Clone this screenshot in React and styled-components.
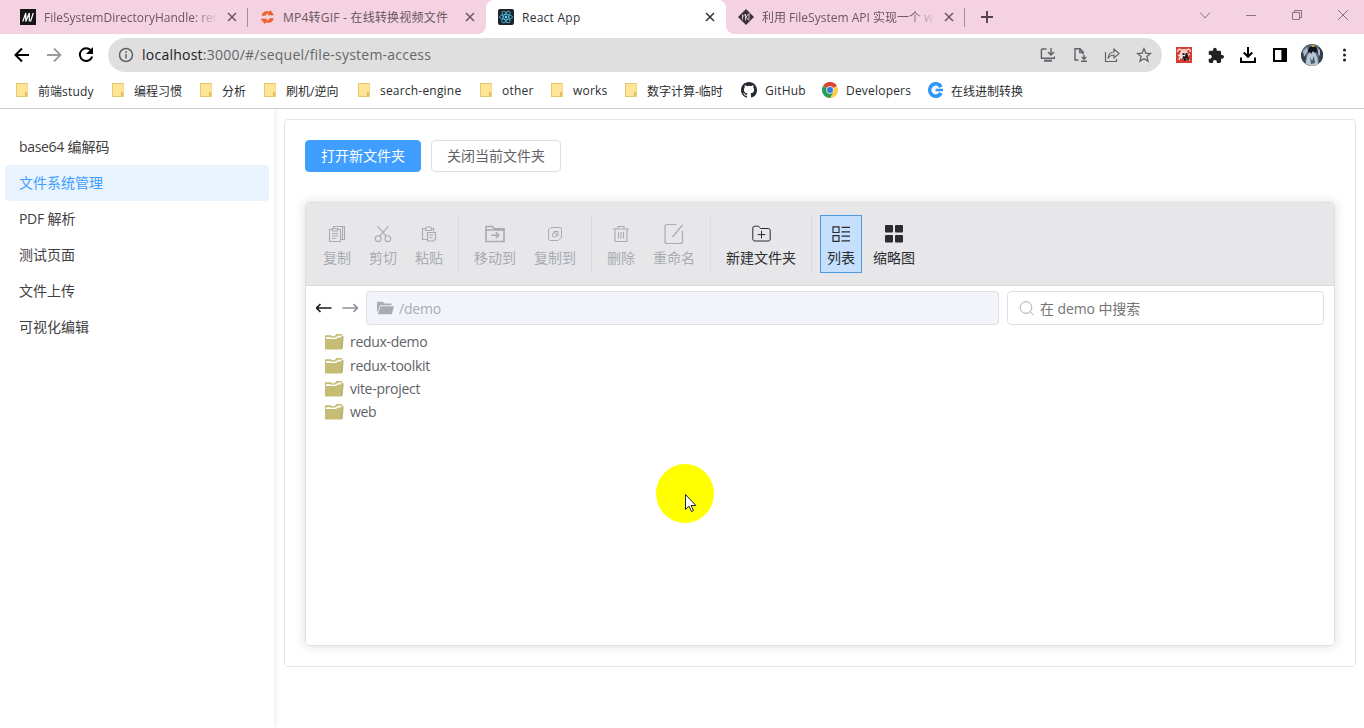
import React from 'react';
import styled, { createGlobalStyle, css } from 'styled-components';

const GlobalStyle = createGlobalStyle`
  * {
    box-sizing: border-box;
  }
  body {
    margin: 0;
    background: #fff;
    overflow: hidden;
    font-family: 'Open Sans', 'Noto Sans CJK SC', sans-serif;
  }
  svg {
    display: block;
    flex: none;
  }
`;

const Page = styled.div`
  position: relative;
  display: flex;
  flex-direction: column;
  width: 1364px;
  height: 728px;
  overflow: hidden;
`;

/* tab strip */

const TabStrip = styled.div`
  display: flex;
  height: 34px;
  padding-left: 8px;
  background: #f4d2e2;
`;

const TabBox = styled.div`
  position: relative;
  display: flex;
  flex: none;
  align-items: center;
  width: ${({ $width }) => $width}px;
  padding: 0 10px 0 12px;
  font-size: 12px;
  color: #6a5660;
  ${({ $line }) =>
    $line &&
    css`
      background: linear-gradient(#a58c98, #a58c98) right 8px / 1px 19px
        no-repeat;
    `}
  ${({ $active }) =>
    $active &&
    css`
      background: #fff;
      color: #303134;
      border-radius: 8px 8px 0 0;

      &::before,
      &::after {
        content: '';
        position: absolute;
        bottom: 0;
        width: 8px;
        height: 8px;
      }
      &::before {
        left: -8px;
        background: radial-gradient(circle at 0 0, transparent 7.5px, #fff 8px);
      }
      &::after {
        right: -8px;
        background: radial-gradient(
          circle at 100% 0,
          transparent 7.5px,
          #fff 8px
        );
      }
    `}
`;

const TabTitle = styled.span`
  flex: 1;
  min-width: 0;
  margin: 0 8px;
  padding-top: 1px;
  overflow: hidden;
  white-space: nowrap;
  line-height: 18px;
  letter-spacing: ${({ $track }) => $track || 0}px;
  ${({ $fade }) =>
    $fade &&
    css`
      mask-image: linear-gradient(to left, transparent, #000 24px);
    `}
`;

const Latin = styled.span`
  letter-spacing: ${({ $track }) => $track || 0}px;
`;

const NewTab = styled.div`
  display: flex;
  flex: none;
  align-items: center;
  width: 217px;
  padding-left: 14px;
  color: #54434b;
`;

const WindowButtons = styled.div`
  display: flex;
  height: 29px;
  color: #6f5b65;

  > span {
    display: flex;
    flex: none;
    align-items: center;
    justify-content: center;
    width: 46px;
  }
`;

/* address bar */

const AddressRow = styled.div`
  display: flex;
  align-items: center;
  height: 42px;
  padding-left: 6px;
`;

const IconSlot = styled.span`
  display: flex;
  align-items: center;
  justify-content: center;
  width: 32px;
  height: 32px;
  color: ${({ $dim }) => ($dim ? '#9b9b9d' : 'inherit')};
`;

const Omnibox = styled.div`
  display: flex;
  align-items: center;
  width: 1054px;
  height: 34px;
  margin: 0 6px;
  padding: 0 2px 0 10px;
  border-radius: 17px;
  background: #dfdfdf;
  color: #5f6368;
`;

const Url = styled.span`
  flex: 1;
  margin-left: 8px;
  font-size: 14px;
  line-height: 20px;
  letter-spacing: 0.24px;
  color: #65686c;

  b {
    font-weight: 400;
    color: #202124;
  }
`;

/* bookmarks */

const BookmarkBar = styled.div`
  display: flex;
  height: 33px;
  padding-left: 14px;
  border-bottom: 1px solid #c9c9cb;
`;

const BookmarkItem = styled.div`
  display: flex;
  align-items: center;
  gap: 8px;
  width: ${({ $width }) => $width}px;
  height: 29px;
  font-size: 12px;
  white-space: nowrap;
  color: #2b2c2f;

  svg {
    margin-bottom: 1px;
  }
`;

const BookmarkFolder = styled.i`
  flex: none;
  width: 12px;
  height: 14px;
  margin: 0 2px 1px;
  border: 1px solid #e6c86b;
  border-right-color: #f0d98a;
  background: linear-gradient(#e3bf57, #e3bf57) right bottom / 2px 4px no-repeat,
    #fde496;
`;

/* page body */

const Body = styled.div`
  display: flex;
  flex: 1;
  min-height: 0;
`;

const Sidebar = styled.nav`
  width: 274px;
  padding: 20px 5px;
  box-shadow: 0 0 6px rgba(0, 0, 0, 0.12);
  clip-path: inset(0 -8px 0 0);
`;

const NavItem = styled.a`
  display: flex;
  align-items: center;
  height: 36px;
  padding: 0 0 2px 14px;
  border-radius: 4px;
  font-size: 14px;
  letter-spacing: 0;
  white-space: pre;
  color: ${({ $active }) => ($active ? '#409eff' : '#3f4043')};
  background: ${({ $active }) => ($active ? '#e9f3fe' : 'transparent')};
`;

const Card = styled.main`
  width: 1072px;
  height: 548px;
  margin: 10px 0 0 10px;
  padding: 20px;
  border: 1px solid #e4e4e7;
  border-radius: 4px;
`;

const Actions = styled.div`
  display: flex;
  gap: 10px;
  margin-bottom: 30px;
`;

const ActionButton = styled.button`
  height: 32px;
  padding: 0 15px;
  border: 1px solid ${({ $primary }) => ($primary ? '#409eff' : '#dcdfe6')};
  border-radius: 4px;
  background: ${({ $primary }) => ($primary ? '#409eff' : '#fff')};
  color: ${({ $primary }) => ($primary ? '#fff' : '#606266')};
  font: inherit;
  font-size: 14px;
  line-height: 1;
`;

const Explorer = styled.section`
  height: 444px;
  border: 1px solid #e0e0e3;
  border-radius: 4px;
  box-shadow: 0 0 12px rgba(0, 0, 0, 0.14);
`;

const Toolbar = styled.div`
  display: flex;
  gap: 4px;
  height: 83px;
  padding: 12px 10px;
  border-bottom: 1px solid #dadadd;
  background: #e7e7ea;
`;

const Tool = styled.div`
  display: flex;
  flex-direction: column;
  align-items: center;
  height: 58px;
  padding: 7px 6px 0;
  border: 1px solid ${({ $selected }) => ($selected ? '#4a9be2' : 'transparent')};
  background: ${({ $selected }) => ($selected ? '#c5dfff' : 'transparent')};
  color: ${({ $disabled }) => ($disabled ? '#a8abb2' : '#2b2c2f')};
  font-size: 14px;
  line-height: 24px;
  white-space: nowrap;
`;

const ToolIcon = styled.span`
  display: flex;
  align-items: center;
  justify-content: center;
  height: 22px;
  margin-bottom: 1px;
`;

const Divider = styled.i`
  width: 1px;
  height: 56px;
  margin: 1px 4px;
  background: #dcdcdf;
`;

const PathRow = styled.div`
  display: flex;
  align-items: center;
  height: 44px;
  padding: 0 10px 0 9px;
`;

const HistoryButton = styled.span`
  display: flex;
  flex: none;
  justify-content: center;
  width: 18px;
  margin-right: ${({ $disabled }) => ($disabled ? 7 : 8)}px;
  color: ${({ $disabled }) => ($disabled ? '#8f9095' : '#1b1b1d')};
`;

const Field = styled.div`
  display: flex;
  flex: none;
  align-items: center;
  gap: 5px;
  width: ${({ $width }) => $width}px;
  height: 34px;
  margin-right: 8px;
  padding: 0 10px;
  border: 1px solid #dcdfe6;
  border-radius: 4px;
  background: ${({ $muted }) => ($muted ? '#f3f4fa' : '#fff')};
  color: ${({ $muted }) => ($muted ? '#a8abb2' : '#757575')};
  font-size: 14px;
  white-space: nowrap;
`;

const SearchField = styled(Field)`
  margin-right: 0;

  svg {
    color: #a8abb2;
  }
`;

const FileList = styled.ul`
  margin: 0;
  padding: 0 0 0 18px;
  list-style: none;
`;

const FileRow = styled.li`
  display: flex;
  align-items: center;
  gap: 6px;
  height: 23.4px;
  font-size: 14px;
  letter-spacing: -0.3px;
  color: #606266;
`;

const Pointer = styled.div`
  position: absolute;
  left: 656px;
  top: 464px;
  width: 58px;
  height: 59px;
  border-radius: 50%;
  background: #ff0;

  svg {
    position: absolute;
    left: 28px;
    top: 29px;
  }
`;

/* icons */

const Svg = ({ w = 16, h = w, box, sw = 1.2, children }) => (
  <svg
    width={w}
    height={h}
    viewBox={box || `0 0 ${w} ${h}`}
    fill="none"
    stroke="currentColor"
    strokeWidth={sw}
  >
    {children}
  </svg>
);

const CloseIcon = () => (
  <Svg w={12} sw={1.5}>
    <path d="M2 2l8 8M10 2l-8 8" />
  </Svg>
);

const MdnIcon = () => (
  <Svg>
    <path d="M0 0h16v16H0z" fill="#161616" stroke="none" />
    <path d="M2.800 12.500L5.800 4v8.500L9.300 4v8.500M10.500 12.500L13.300 4" stroke="#fff" />
  </Svg>
);

const ConvertIcon = () => (
  <Svg w={15} h={16}>
    <path
      d="M2 6.500C2.500 3 6 1.500 9 3l1.500-1.500L13.500 6H8l1.300-1.300C7 3.900 5.500 5 5.400 6.500zM13.300 9.500C12.800 13 9 14.500 6.300 13l-1.600 1.600L1 10h6l-1.300 1.300c2.300.8 3.800-.3 4-1.800z"
      fill="#f0602a"
      stroke="#f0602a"
      strokeWidth=".6"
    />
  </Svg>
);

const ReactIcon = () => (
  <Svg sw={0.9}>
    <rect width="16" height="16" rx="2" fill="#1f232b" stroke="none" />
    <g stroke="#4bb4d6">
      <ellipse cx="8" cy="8" rx="6.500" ry="2.500" />
      <ellipse cx="8" cy="8" rx="6.500" ry="2.500" transform="rotate(60 8 8)" />
      <ellipse cx="8" cy="8" rx="6.500" ry="2.500" transform="rotate(120 8 8)" />
    </g>
    <circle cx="8" cy="8" r="1.300" fill="#61dafb" stroke="none" />
  </Svg>
);

const DiamondIcon = () => (
  <Svg>
    <path d="M8 0l8 8-8 8-8-8z" fill="#3a3238" stroke="none" />
    <path
      d="M4.500 5.500v5M4.500 8l3-3v6.500M8 8l3-3.500v6M8 8l3 3.500"
      stroke="#e8d5df"
      strokeWidth=".9"
    />
  </Svg>
);

const GithubIcon = () => (
  <Svg box="0 0 16 16">
    <path
      fill="#24292f"
      stroke="none"
      d="M8 0C3.580 0 0 3.580 0 8c0 3.540 2.290 6.530 5.470 7.590.4.070.55-.17.55-.38v-1.490c-2.010.37-2.530-.49-2.690-.94-.09-.23-.48-.94-.82-1.130-.28-.15-.68-.52-.01-.53.63-.01 1.080.58 1.230.82.72 1.210 1.870.87 2.330.66.070-.52.28-.87.51-1.070-1.780-.2-3.640-.89-3.640-3.950 0-.87.31-1.590.82-2.150-.08-.2-.36-1.020.08-2.120 0 0 .67-.21 2.200.82a7.600 7.600 0 0 1 4 0c1.530-1.040 2.200-.82 2.200-.82.44 1.100.16 1.920.08 2.120.51.56.82 1.270.82 2.150 0 3.070-1.870 3.750-3.650 3.950.29.25.54.73.54 1.480v2.200c0 .21.15.46.55.38A8 8 0 0 0 16 8c0-4.420-3.580-8-8-8z"
    />
  </Svg>
);

const ChromeIcon = () => (
  <Svg>
    <g stroke="none">
      <path d="M8 8L1.070 4A8 8 0 0 1 14.930 4z" fill="#db4437" />
      <path d="M8 8l6.930-4A8 8 0 0 1 8 16z" fill="#ffcd40" />
      <path d="M8 8L1.070 4A8 8 0 0 0 8 16l3.500-6z" fill="#2a9d58" />
      <circle cx="8" cy="8" r="3.800" fill="#f1f1f1" />
      <circle cx="8" cy="8" r="3" fill="#2f7de1" />
    </g>
  </Svg>
);

const BlueCIcon = () => (
  <Svg w={16}>
    <path d="M14 5A6 6 0 1 0 14 11" stroke="#3297f5" strokeWidth="4" />
    <path d="M8.500 8H16" stroke="#3297f5" strokeWidth="2.600" />
    <path d="M11 5.200a3.600 3.600 0 1 0 0 5.600" stroke="#fff" strokeWidth="1.200" />
  </Svg>
);

const ExtensionIcon = () => (
  <Svg>
    <path d="M0 0h16v16H0z" fill="#d63c30" stroke="none" />
    <circle cx="8" cy="8" r="4.500" fill="#f3dcd8" stroke="none" />
    <path
      d="M1.500 5c0-3 3-3.500 4-1.500 1.500-1 3.500-1 5 0 1-2 4-1.500 4 1.500M2 8.500h2M3 13c0-2 1-3 3-3M12 12l2 1.500M12 8l2-1"
      stroke="#f7e6e3"
      strokeWidth="1.300"
    />
    <path
      d="M6.500 6h2v2h-2zM9.500 6h2l.5 3 1.500 4.500-2-.5-1-2-1 3H8l-.5-2.500L6 13l1-4 2 .500z"
      fill="#25191a"
      stroke="none"
    />
  </Svg>
);

const AvatarIcon = () => (
  <Svg w={22}>
    <defs>
      <clipPath id="face">
        <circle cx="11" cy="11" r="11" />
      </clipPath>
    </defs>
    <g clipPath="url(#face)" stroke="none">
      <path d="M0 0h22v22H0z" fill="#566571" />
      <path d="M0 9c3-1 5 2 5 5l-2 8H0zM18 3l4 4v14l-4-3z" fill="#353e4a" />
      <path d="M2 7l4-4 1 4-4 6zM16 4l3 2v6l-2-2z" fill="#a9b9c6" />
      <path d="M5 20c0-7 2-12 6-13 4 1 6 6 6 14l-6 1z" fill="#b5c6d6" />
      <path d="M7 9c0-5 2-7 5-7s5 3 5 8l-2-3-1 2-2-2-2 3-1-2z" fill="#10141c" />
      <path d="M9 13l2 4 2-5 1 7-4 1z" fill="#4b596a" />
      <path d="M10 1h4l-1 2h-2z" fill="#d2a53b" />
    </g>
  </Svg>
);

const FileFolderIcon = () => (
  <Svg w={20} h={17}>
    <path
      d="M1 2.200h6l1 1h2.500L12.500 1h5.300l.7 2.200h1.200l-1 12.300-1.200.9H1z"
      fill="#c6bd74"
      stroke="none"
    />
    <path
      d="M2 4.600c3-1.700 5 .4 8 .2C13 4.500 12 2.500 17.500 2.500L17 4.400h-3L12 6H2z"
      fill="#fff"
      stroke="none"
    />
    <path d="M18.500 4.800l-1 11" stroke="#a9a47b" strokeWidth=".7" />
  </Svg>
);

const toolIcons = {
  copy: (
    <Svg w={18} sw={1.1}>
      <path d="M1.500 4.500h3v-1h5v1h3v12h-11zM4.500 4.500V6h5V4.500M5.500 3.500v-2h11v13h-4M4 8.500h6M4 11h6M4 13.500h3.500M14.500 1.500v13" />
    </Svg>
  ),
  cut: (
    <Svg w={18} sw={1.1}>
      <circle cx="4.200" cy="13.700" r="2.900" />
      <circle cx="13.800" cy="13.700" r="2.900" />
      <path d="M3.500 1.200L12.300 11.200M14.500 1.200L5.700 11.200" />
    </Svg>
  ),
  paste: (
    <Svg w={16} sw={1.2}>
      <path d="M6 13.500H1.500v-11h3v2h6v-2h2v3M4.500 2.500l1-1.500h4l1 1.500M6.500 6.500h8v6.500l-2 2h-6zM8.500 9h4M8.500 11.500h3" />
    </Svg>
  ),
  move: (
    <Svg w={20} h={18} sw={1.6}>
      <path d="M1 16.500v-15h6.500l2 2.300H19v12.700zM1 5h18M6 10.300h7.500M10.800 7.300l3 3-3 3" />
    </Svg>
  ),
  copyTo: (
    <Svg w={16} sw={1}>
      <path d="M4 1.500h8.500a2 2 0 0 1 2 2V11l-3.500 3.500H3.500a2 2 0 0 1-2-2V4z" />
      <rect x="5.500" y="7" width="4" height="4" rx="1" />
      <path d="M7 7V5.500h4v4H9.500" />
    </Svg>
  ),
  remove: (
    <Svg w={16} h={18} sw={1.1}>
      <path d="M0 4h16M5 4V1.500h6V4M2 4v12.500h12V4M5.500 7v6.500M8 7v6.500M10.500 7v6.500" />
    </Svg>
  ),
  rename: (
    <Svg w={20} h={22} sw={1.2}>
      <path d="M12.500 1.500H3a2 2 0 0 0-2 2v15a2 2 0 0 0 2 2h13.500a2 2 0 0 0 2-2V8M18.500 2L8.500 14" />
    </Svg>
  ),
  create: (
    <Svg w={19} h={18} sw={1}>
      <path d="M.8 3a1.800 1.800 0 0 1 1.800-1.800h4l2 2.300h7.600a2 2 0 0 1 2 2V14a2 2 0 0 1-2 2H2.800a2 2 0 0 1-2-2zM9.500 5.800v7.600M5.700 9.600h7.600" />
    </Svg>
  ),
  list: (
    <Svg w={18} h={18} sw={1.2}>
      <path d="M1 1.800h6v5.700H1zM1 10.700h6v5.700H1zM9.500 2.300H18M9.500 6.900H18M9.500 11.200H18M9.500 15.800H18" />
    </Svg>
  ),
  grid: (
    <Svg w={18}>
      <g fill="currentColor" stroke="none">
        <rect width="8" height="7.500" rx="1" />
        <rect x="10" width="8" height="7.500" rx="1" />
        <rect y="10" width="8" height="7.500" rx="1" />
        <rect x="10" y="10" width="8" height="7.500" rx="1" />
      </g>
    </Svg>
  ),
};

const HistoryArrow = () => (
  <Svg w={16} h={12} sw={1.6}>
    <path d="M.5 6h15M11.500 2l4 4-4 4" />
  </Svg>
);

const FlippedArrow = styled.span`
  transform: scaleX(-1);
`;

/* data */

const bookmarks = [
  { cjk: '前端', latin: 'study', width: 96 },
  { cjk: '编程习惯', width: 88 },
  { cjk: '分析', width: 64 },
  { cjk: '刷机/逆向', width: 94 },
  { latin: 'search-engine', width: 122 },
  { latin: 'other', width: 71 },
  { latin: 'works', width: 74 },
  { cjk: '数字计算-临时', width: 118 },
  { latin: 'GitHub', width: 81, icon: <GithubIcon /> },
  { latin: 'Developers', width: 105, icon: <ChromeIcon /> },
  { cjk: '在线进制转换', width: 110, icon: <BlueCIcon /> },
];

const navItems = [
  { latin: 'base64', cjk: ' 编解码' },
  { cjk: '文件系统管理', active: true },
  { latin: 'PDF', cjk: ' 解析' },
  { cjk: '测试页面' },
  { cjk: '文件上传' },
  { cjk: '可视化编辑' },
];

const toolGroups = [
  [
    { icon: 'copy', label: '复制', disabled: true },
    { icon: 'cut', label: '剪切', disabled: true },
    { icon: 'paste', label: '粘贴', disabled: true },
  ],
  [
    { icon: 'move', label: '移动到', disabled: true },
    { icon: 'copyTo', label: '复制到', disabled: true },
  ],
  [
    { icon: 'remove', label: '删除', disabled: true },
    { icon: 'rename', label: '重命名', disabled: true },
  ],
  [{ icon: 'create', label: '新建文件夹' }],
  [
    { icon: 'list', label: '列表', selected: true },
    { icon: 'grid', label: '缩略图' },
  ],
];

const files = ['redux-demo', 'redux-toolkit', 'vite-project', 'web'];

const Tab = ({ icon, width, active, line, fade, track, children }) => (
  <TabBox $width={width} $active={active} $line={line}>
    {icon}
    <TabTitle $fade={fade} $track={track}>
      {children}
    </TabTitle>
    <CloseIcon />
  </TabBox>
);

const Tabs = () => (
  <TabStrip>
    <Tab icon={<MdnIcon />} width={240} line fade>
      FileSystemDirectoryHandle: remove
    </Tab>
    <Tab icon={<ConvertIcon />} width={238} track={0.22}>
      MP4转GIF - 在线转换视频文件
    </Tab>
    <Tab icon={<ReactIcon />} width={240} track={0.25} active>
      React App
    </Tab>
    <Tab icon={<DiamondIcon />} width={239} line fade>
      利用 FileSystem API 实现一个 web
    </Tab>
    <NewTab>
      <Svg w={16} sw={1.9}>
        <path d="M8 2v12M2 8h12" />
      </Svg>
    </NewTab>
    <WindowButtons>
      <span>
        <Svg w={12} sw={0.8}>
          <path d="M1 3.500l5 5.500 5-5.500" />
        </Svg>
      </span>
      <span>
        <Svg w={12} sw={0.8}>
          <path d="M1 6.500h10" />
        </Svg>
      </span>
      <span>
        <Svg w={12} sw={0.8}>
          <path d="M1.500 3.500h7v7h-7zM3.500 3.500v-2h7v7h-2" />
        </Svg>
      </span>
      <span>
        <Svg w={12} sw={0.8}>
          <path d="M1 1l10 10M11 1L1 11" />
        </Svg>
      </span>
    </WindowButtons>
  </TabStrip>
);

const OmniboxIcons = () => (
  <>
    <IconSlot>
      <Svg sw={1.4}>
        <path d="M6.500 2H2.200a.8.8 0 0 0-.8.800v8.400h13V9.500M11 1v6.500M8 5l3 3 3-3" />
        <path d="M4 13.700h8" strokeWidth="2" />
      </Svg>
    </IconSlot>
    <IconSlot>
      <Svg sw={1.4}>
        <path d="M6.500 13H3V1.800h5l3.200 3.200v2.500M7.800 2v3.500h3M12 8v4M9.800 10l2.200 2.200L14.200 10M9 14.300h6" />
      </Svg>
    </IconSlot>
    <IconSlot>
      <Svg sw={1.2}>
        <path d="M1.500 5v9.500h11V12M4 11.500C4.500 7 7 5 10 5V2l5 4.500-5 4.500V8c-2.500 0-4.500.8-6 3.500z" />
      </Svg>
    </IconSlot>
    <IconSlot>
      <Svg sw={1.3}>
        <path d="M8 1.800l1.800 4.300 4.700.4-3.600 3 1.100 4.600L8 11.700l-4 2.400 1.100-4.600-3.600-3 4.700-.4z" />
      </Svg>
    </IconSlot>
  </>
);

const AddressBar = () => (
  <AddressRow>
    <IconSlot>
      <Svg w={16} sw={2}>
        <path d="M15 8H2M8 1.500L1.500 8 8 14.500" />
      </Svg>
    </IconSlot>
    <IconSlot $dim>
      <Svg w={16} sw={1.8}>
        <path d="M1 8h13M8 1.500L14.500 8 8 14.500" />
      </Svg>
    </IconSlot>
    <IconSlot>
      <Svg w={16} sw={2}>
        <path d="M13.300 4A6.300 6.300 0 1 0 14.200 9.500" />
        <path d="M15 0v7H8z" fill="currentColor" stroke="none" />
      </Svg>
    </IconSlot>
    <Omnibox>
      <Svg w={16} sw={1.5}>
        <circle cx="8" cy="8" r="6.500" />
        <path d="M8 7v4.500M8 4.300v1.600" />
      </Svg>
      <Url>
        <b>localhost</b>:3000/#/sequel/file-system-access
      </Url>
      <OmniboxIcons />
    </Omnibox>
    <IconSlot>
      <ExtensionIcon />
    </IconSlot>
    <IconSlot>
      <Svg w={16} box="1 0 22 22">
        <path
          fill="#202124"
          stroke="none"
          d="M20.500 11H19V7c0-1.100-.9-2-2-2h-4V3.500a2.500 2.500 0 0 0-5 0V5H4c-1.100 0-2 .9-2 2v3.800h1.500a2.700 2.700 0 0 1 0 5.400H2V20c0 1.100.9 2 2 2h3.800v-1.500a2.700 2.700 0 0 1 5.400 0V22H17c1.100 0 2-.9 2-2v-4h1.500a2.500 2.500 0 0 0 0-5z"
        />
      </Svg>
    </IconSlot>
    <IconSlot>
      <Svg w={16} sw={2}>
        <path d="M8 0v9.500M3.800 5.500L8 9.800l4.200-4.300M1 10.500V15h14v-4.500" />
      </Svg>
    </IconSlot>
    <IconSlot>
      <Svg w={14}>
        <path d="M1 1h12v12H1z" strokeWidth="2" />
        <path d="M9 1h4v12H9z" fill="currentColor" />
      </Svg>
    </IconSlot>
    <IconSlot>
      <AvatarIcon />
    </IconSlot>
    <IconSlot>
      <Svg w={4} h={14}>
        <g fill="#202124" stroke="none">
          <circle cx="2.500" cy="2" r="1.500" />
          <circle cx="2.500" cy="7" r="1.500" />
          <circle cx="2.500" cy="12" r="1.500" />
        </g>
      </Svg>
    </IconSlot>
  </AddressRow>
);

const Bookmarks = () => (
  <BookmarkBar>
    {bookmarks.map(({ cjk, latin, width, icon }) => (
      <BookmarkItem key={cjk || latin} $width={width}>
        {icon || <BookmarkFolder />}
        <span>
          {cjk}
          {latin && <Latin $track={0.2}>{latin}</Latin>}
        </span>
      </BookmarkItem>
    ))}
  </BookmarkBar>
);

const ToolGroups = () =>
  toolGroups.map((group, i) => (
    <React.Fragment key={group[0].icon}>
      {i > 0 && <Divider />}
      {group.map(({ icon, label, disabled, selected }) => (
        <Tool key={icon} $disabled={disabled} $selected={selected}>
          <ToolIcon>{toolIcons[icon]}</ToolIcon>
          {label}
        </Tool>
      ))}
    </React.Fragment>
  ));

const FileExplorer = () => (
  <Explorer>
    <Toolbar>
      <ToolGroups />
    </Toolbar>
    <PathRow>
      <HistoryButton>
        <FlippedArrow>
          <HistoryArrow />
        </FlippedArrow>
      </HistoryButton>
      <HistoryButton $disabled>
        <HistoryArrow />
      </HistoryButton>
      <Field $width={633} $muted>
        <Svg w={17} h={14}>
          <path
            d="M0 10V.8h5.800L7.500 2.500h7v1.800H3L.8 11zM3.400 5.200H17l-2.200 8H.9z"
            fill="currentColor"
            stroke="none"
          />
        </Svg>
        <Latin $track={-0.2}>/demo</Latin>
      </Field>
      <SearchField $width={317}>
        <Svg w={17} sw={1}>
          <circle cx="8" cy="7.500" r="5.800" />
          <path d="M12.200 11.700l3.300 3.500" />
        </Svg>
        <Latin $track={-0.1}>在 demo 中搜索</Latin>
      </SearchField>
    </PathRow>
    <FileList>
      {files.map(name => (
        <FileRow key={name}>
          <FileFolderIcon />
          {name}
        </FileRow>
      ))}
    </FileList>
  </Explorer>
);

const App = () => (
  <Page>
    <GlobalStyle />
    <Tabs />
    <AddressBar />
    <Bookmarks />
    <Body>
      <Sidebar>
        {navItems.map(({ latin, cjk, active }) => (
          <NavItem key={cjk} $active={active}>
            {latin && <Latin $track={-0.35}>{latin}</Latin>}
            {cjk}
          </NavItem>
        ))}
      </Sidebar>
      <Card>
        <Actions>
          <ActionButton $primary>打开新文件夹</ActionButton>
          <ActionButton>关闭当前文件夹</ActionButton>
        </Actions>
        <FileExplorer />
      </Card>
    </Body>
    <Pointer>
      <svg width="13" height="21" viewBox="0 0 13 21">
        <path
          d="M1.500 1.500v15l3.500-3.300 2.500 5.300 2-.9-2.400-5.100h4.700z"
          fill="#fff"
          stroke="#222"
        />
      </svg>
    </Pointer>
  </Page>
);

export default App;
